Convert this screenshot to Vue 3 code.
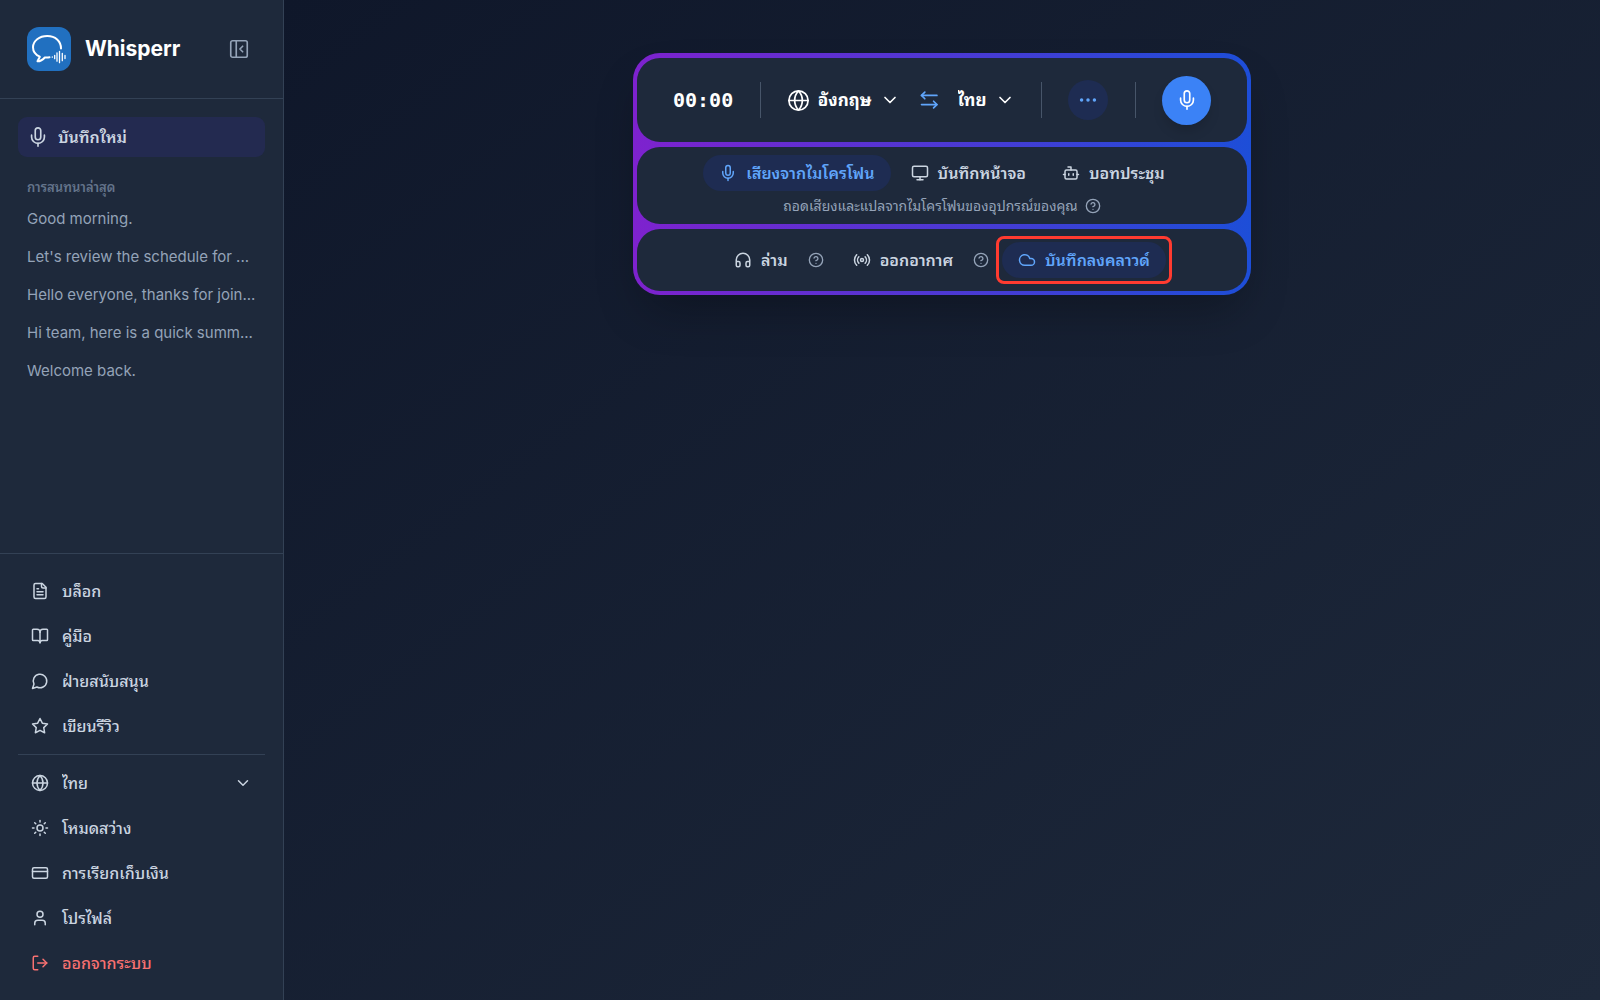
<script setup>
import { h, ref } from 'vue'

const paths = {
  panel: '<rect x="3" y="3" width="18" height="18" rx="2"/><path d="M9 3v18"/><path d="m16 15-3-3 3-3"/>',
  mic: '<path d="M12 2a3 3 0 0 0-3 3v7a3 3 0 0 0 6 0V5a3 3 0 0 0-3-3Z"/><path d="M19 10v2a7 7 0 0 1-14 0v-2"/><path d="M12 19v3"/>',
  file: '<path d="M15 2H6a2 2 0 0 0-2 2v16a2 2 0 0 0 2 2h12a2 2 0 0 0 2-2V7Z"/><path d="M14 2v4a2 2 0 0 0 2 2h4"/><path d="M10 9H8"/><path d="M16 13H8"/><path d="M16 17H8"/>',
  book: '<path d="M12 7v14"/><path d="M3 18a1 1 0 0 1-1-1V4a1 1 0 0 1 1-1h5a4 4 0 0 1 4 4 4 4 0 0 1 4-4h5a1 1 0 0 1 1 1v13a1 1 0 0 1-1 1h-6a3 3 0 0 0-3 3 3 3 0 0 0-3-3z"/>',
  chat: '<path d="M7.9 20A9 9 0 1 0 4 16.1L2 22Z"/>',
  star: '<path d="M12 2l3.09 6.26L22 9.27l-5 4.87 1.18 6.88L12 17.77l-6.18 3.25L7 14.14 2 9.27l6.91-1.01L12 2z"/>',
  globe: '<circle cx="12" cy="12" r="10"/><path d="M12 2a14.5 14.5 0 0 0 0 20 14.5 14.5 0 0 0 0-20"/><path d="M2 12h20"/>',
  sun: '<circle cx="12" cy="12" r="4"/><path d="M12 2v2"/><path d="M12 20v2"/><path d="m4.93 4.93 1.41 1.41"/><path d="m17.66 17.66 1.41 1.41"/><path d="M2 12h2"/><path d="M20 12h2"/><path d="m6.34 17.66-1.41 1.41"/><path d="m19.07 4.93-1.41 1.41"/>',
  card: '<rect x="2" y="5" width="20" height="14" rx="2"/><path d="M2 10h20"/>',
  user: '<path d="M19 21v-2a4 4 0 0 0-4-4H9a4 4 0 0 0-4 4v2"/><circle cx="12" cy="7" r="4"/>',
  logout: '<path d="M9 21H5a2 2 0 0 1-2-2V5a2 2 0 0 1 2-2h4"/><path d="m16 17 5-5-5-5"/><path d="M21 12H9"/>',
  chevron: '<path d="m6 9 6 6 6-6"/>',
  swap: '<path d="M7 2.5 3 6.5l4 4"/><path d="M3 6.5h18.5"/><path d="m17.5 13.5 4 4-4 4"/><path d="M21.5 17.5H3"/>',
  dots: '<circle cx="5" cy="12" r="1"/><circle cx="12" cy="12" r="1"/><circle cx="19" cy="12" r="1"/>',
  monitor: '<rect x="2" y="3" width="20" height="14" rx="2"/><path d="M8 21h8"/><path d="M12 17v4"/>',
  bot: '<path d="M12 8V4H8"/><rect x="4" y="8" width="16" height="12" rx="2"/><path d="M2 14h2"/><path d="M20 14h2"/><path d="M15 13v2"/><path d="M9 13v2"/>',
  help: '<circle cx="12" cy="12" r="10"/><path d="M9.09 9a3 3 0 0 1 5.83 1c0 2-3 3-3 3"/><path d="M12 17h.01"/>',
  headphones: '<path d="M3 14h3a2 2 0 0 1 2 2v3a2 2 0 0 1-2 2H5a2 2 0 0 1-2-2v-7a9 9 0 0 1 18 0v7a2 2 0 0 1-2 2h-1a2 2 0 0 1-2-2v-3a2 2 0 0 1 2-2h3"/>',
  radio: '<path d="M4.9 19.1C1 15.2 1 8.8 4.9 4.9"/><path d="M7.8 16.2c-2.3-2.3-2.3-6.1 0-8.5"/><circle cx="12" cy="12" r="2"/><path d="M16.2 7.8c2.3 2.3 2.3 6.1 0 8.5"/><path d="M19.1 4.9C23 8.8 23 15.1 19.1 19"/>',
  cloud: '<path d="M17.5 19H9a7 7 0 1 1 6.71-9h1.79a4.5 4.5 0 1 1 0 9Z"/>',
}

const Icon = ({ name, size = 18 }) =>
  h('svg', {
    width: size,
    height: size,
    viewBox: '0 0 24 24',
    fill: 'none',
    stroke: 'currentColor',
    'stroke-width': size > 20 ? 1.8 : 2,
    'stroke-linecap': 'round',
    'stroke-linejoin': 'round',
    'aria-hidden': 'true',
    innerHTML: paths[name],
  })
Icon.props = ['name', 'size']

const recent = [
  'Good morning.',
  "Let's review the schedule for ...",
  'Hello everyone, thanks for join...',
  'Hi team, here is a quick summ...',
  'Welcome back.',
]
const links = [
  { icon: 'file', label: 'บล็อก' },
  { icon: 'book', label: 'คู่มือ' },
  { icon: 'chat', label: 'ฝ่ายสนับสนุน' },
  { icon: 'star', label: 'เขียนรีวิว' },
]
const sources = [
  { id: 'mic', icon: 'mic', label: 'เสียงจากไมโครโฟน' },
  { id: 'screen', icon: 'monitor', label: 'บันทึกหน้าจอ' },
  { id: 'bot', icon: 'bot', label: 'บอทประชุม' },
]
const source = ref('mic')
const from = ref('en')
const to = ref('th')
const locale = ref('th')
</script>

<template>
  <div class="app">
    <aside class="sidebar">
      <header class="brand">
        <svg class="logo" viewBox="0 0 44 44" aria-hidden="true">
          <rect width="44" height="44" rx="12" fill="#2170c0" />
          <g fill="none" stroke="#fff" stroke-linecap="round" stroke-linejoin="round">
            <path stroke-width="2" d="M34 21.5C34 14 28.3 9 20.3 9 12.300 9 6 13.800 6 20.300c0 4.400 2.500 7.600 6.800 9.400L10.500 34.300c3.300 0 5.500-1.600 7.300-3.800 1.700.200 3.400.100 4.700-.200" />
            <path stroke-width="1.3" d="M25.3 29.800v.4M27.700 28.300v3.400M30 25.800v8.400M32.500 24.300v11.400M35.300 26.300v7.400M38 28.500v3" />
          </g>
        </svg>
        <h1>Whisperr</h1>
        <button class="collapse" type="button" aria-label="Collapse"><Icon name="panel" :size="22" /></button>
      </header>

      <nav class="history">
        <button class="new" type="button"><Icon name="mic" :size="22" />บันทึกใหม่</button>
        <h2>การสนทนาล่าสุด</h2>
        <a v-for="item in recent" :key="item" href="#">{{ item }}</a>
      </nav>

      <nav class="menu">
        <a v-for="l in links" :key="l.label" class="item" href="#"><Icon :name="l.icon" />{{ l.label }}</a>
        <hr />
        <label class="item">
          <Icon name="globe" />
          <select v-model="locale" aria-label="ภาษา"><option value="th">ไทย</option></select>
          <Icon name="chevron" />
        </label>
        <button class="item" type="button"><Icon name="sun" />โหมดสว่าง</button>
        <a class="item" href="#"><Icon name="card" />การเรียกเก็บเงิน</a>
        <a class="item" href="#"><Icon name="user" />โปรไฟล์</a>
        <button class="item danger" type="button"><Icon name="logout" />ออกจากระบบ</button>
      </nav>
    </aside>

    <main>
      <section class="deck">
        <div class="panel controls">
          <span class="time">00:00</span>
          <i class="rule"></i>
          <div class="langs">
            <label class="lang">
              <Icon name="globe" :size="23" />
              <select v-model="from" aria-label="จาก"><option value="en">อังกฤษ</option></select>
              <Icon name="chevron" :size="20" />
            </label>
            <button class="swap" type="button" aria-label="สลับ"><Icon name="swap" :size="20" /></button>
            <label class="lang">
              <select v-model="to" aria-label="เป็น"><option value="th">ไทย</option></select>
              <Icon name="chevron" :size="20" />
            </label>
          </div>
          <i class="rule"></i>
          <button class="more" type="button" aria-label="เพิ่มเติม"><Icon name="dots" :size="22" /></button>
          <i class="rule"></i>
          <button class="record" type="button" aria-label="บันทึก"><Icon name="mic" :size="22" /></button>
        </div>

        <div class="panel source">
          <div class="tabs">
            <button
              v-for="s in sources"
              :key="s.id"
              type="button"
              class="pill"
              :class="{ on: source === s.id }"
              @click="source = s.id"
            ><Icon :name="s.icon" />{{ s.label }}</button>
          </div>
          <p>ถอดเสียงและแปลจากไมโครโฟนของอุปกรณ์ของคุณ<Icon name="help" :size="16" /></p>
        </div>

        <div class="panel modes">
          <div class="mode">
            <button class="pill" type="button"><Icon name="headphones" />ล่าม</button>
            <button class="hint" type="button" aria-label="ล่าม"><Icon name="help" :size="16" /></button>
          </div>
          <div class="mode">
            <button class="pill" type="button"><Icon name="radio" />ออกอากาศ</button>
            <button class="hint" type="button" aria-label="ออกอากาศ"><Icon name="help" :size="16" /></button>
          </div>
          <div class="focus">
            <button class="pill on" type="button"><Icon name="cloud" />บันทึกลงคลาวด์</button>
          </div>
        </div>
      </section>
    </main>
  </div>
</template>

<style>
body {
  background: #0f172a;
}
</style>

<style scoped>
* {
  box-sizing: border-box;
}
.app {
  display: flex;
  min-height: 100vh;
  font-family: Inter, Thonburi, "Noto Sans Thai Looped", Loma, Garuda, Waree, "Noto Sans Thai", "Noto Sans", sans-serif;
  font-size: 16px;
  line-height: 20px;
  color: #cbd5e1;
}
button,
select {
  font: inherit;
  color: inherit;
  background: none;
  border: 0;
  padding: 0;
  cursor: pointer;
}
select {
  appearance: none;
  outline: none;
}
a {
  color: inherit;
  text-decoration: none;
}
svg {
  flex: none;
  display: block;
}
.sidebar {
  width: 284px;
  flex: none;
  display: flex;
  flex-direction: column;
  background: #1e293b;
  border-right: 1px solid #334155;
}
.brand {
  display: flex;
  align-items: center;
  height: 99px;
  padding: 0 33px 0 27px;
  border-bottom: 1px solid #334155;
}
.logo {
  width: 44px;
  height: 44px;
}
.brand h1 {
  margin: 0 0 0 14px;
  font-size: 21px;
  line-height: 28px;
  font-weight: 700;
  color: #fff;
}
.collapse {
  margin-left: auto;
  color: #94a3b8;
}
.history {
  flex: 1;
  display: flex;
  flex-direction: column;
  padding: 18px;
}
.new {
  display: flex;
  align-items: center;
  gap: 9px;
  height: 40px;
  padding: 0 9px;
  border-radius: 9px;
  background: #232a50;
  font-weight: 600;
}
.history h2 {
  margin: 21px 9px 4px;
  font-size: 13px;
  line-height: 18px;
  font-weight: 600;
  color: #64748b;
}
.history a {
  padding: 7px 9px;
  line-height: 24px;
  font-size: 15px;
  color: #94a3b8;
  white-space: nowrap;
}
.menu {
  display: flex;
  flex-direction: column;
  gap: 5px;
  padding: 17px 18px;
  border-top: 1px solid #334155;
}
.menu hr {
  width: 100%;
  height: 1px;
  margin: 3px 0;
  border: 0;
  background: #334155;
}
.item {
  display: flex;
  align-items: center;
  gap: 13px;
  height: 40px;
  padding: 0 13px;
  font-weight: 500;
  text-align: left;
}
.item select {
  flex: 1;
}
.danger {
  color: #f87171;
}
main {
  flex: 1;
  display: flex;
  justify-content: center;
  align-items: flex-start;
  padding: 53px 24px;
  background: linear-gradient(to bottom right, #0f172a, #1e293b);
}
.deck {
  width: 618px;
  display: flex;
  flex-direction: column;
  gap: 5px;
  padding: 5px 4px 4px;
  border-radius: 27px;
  background: linear-gradient(to right, #7e22ce, #1d4ed8);
  box-shadow: 0 24px 48px -12px rgba(0, 0, 0, 0.3);
}
.panel {
  border-radius: 23px;
  background: #1e293b;
}
.controls {
  display: flex;
  align-items: center;
  justify-content: space-between;
  height: 84px;
  padding: 0 36px;
  color: #fff;
}
.time {
  font-family: "DejaVu Sans Mono", monospace;
  font-weight: 700;
  font-size: 20px;
}
.rule {
  width: 1px;
  height: 36px;
  background: #475569;
}
.langs,
.lang {
  display: flex;
  align-items: center;
}
.langs {
  gap: 19px;
}
.lang {
  gap: 8px;
  font-size: 17px;
  font-weight: 700;
}
.swap {
  color: #60a5fa;
}
.more,
.record {
  display: grid;
  place-items: center;
  border-radius: 50%;
}
.more {
  width: 40px;
  height: 40px;
  color: #60a5fa;
  background: #1e2c52;
}
.record {
  width: 49px;
  height: 49px;
  background: #3b82f6;
  box-shadow: 0 8px 14px -4px rgba(0, 0, 0, 0.2);
}
.source {
  height: 77px;
  padding-top: 8px;
}
.tabs {
  display: flex;
  justify-content: center;
  gap: 4px;
}
.pill {
  display: flex;
  align-items: center;
  gap: 9px;
  height: 36px;
  padding: 0 16px;
  border-radius: 18px;
  font-weight: 600;
}
.pill.on {
  color: #60a5fa;
  background: #1e2c52;
}
.source p {
  display: flex;
  align-items: center;
  justify-content: center;
  gap: 7px;
  margin: 5px 0 0;
  font-size: 14px;
  line-height: 20px;
  color: #94a3b8;
}
.modes {
  display: flex;
  align-items: center;
  justify-content: center;
  gap: 9px;
  height: 62px;
}
.mode {
  display: flex;
  align-items: center;
}
.hint {
  padding: 0 4px;
  color: #94a3b8;
}
.focus {
  margin: 0 -6px;
  padding: 3px;
  border: 3px solid #ff3b30;
  border-radius: 8px;
}
</style>
